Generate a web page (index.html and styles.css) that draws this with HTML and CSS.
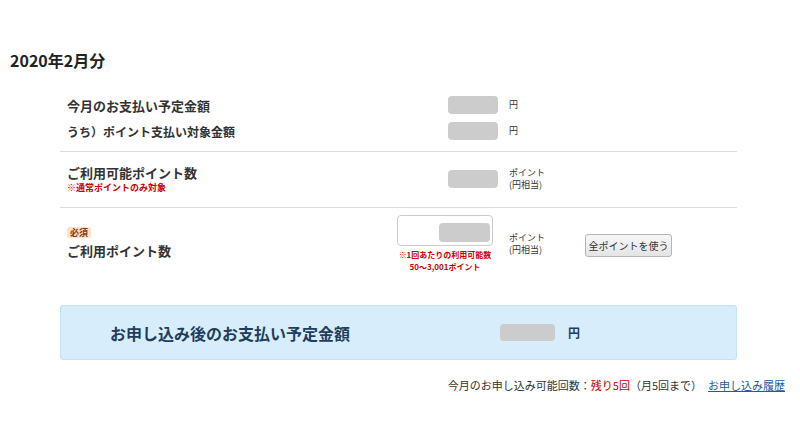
FILE: index.html
```html
<!DOCTYPE html>
<html lang="ja">
<head>
  <meta charset="UTF-8">
  <meta name="viewport" content="width=device-width, initial-scale=1.0">
  <title>ポイント利用</title>
  <link rel="stylesheet" href="styles.css">
</head>
<body>

  <h2 class="month-title">2020年2月分</h2>

  <div class="point-form">
    <!-- Payment amounts -->
    <div class="form-row row-amounts">
      <div class="line">
        <div class="label">今月のお支払い予定金額</div>
        <div class="value"><span class="mask"></span></div>
        <div class="unit">円</div>
      </div>
      <div class="line">
        <div class="label label-sub">うち）ポイント支払い対象金額</div>
        <div class="value"><span class="mask"></span></div>
        <div class="unit">円</div>
      </div>
    </div>

    <!-- Available points -->
    <div class="form-row row-available">
      <div class="line">
        <div class="label">
          <div class="label-text">ご利用可能ポイント数</div>
          <p class="note">※通常ポイントのみ対象</p>
        </div>
        <div class="value"><span class="mask"></span></div>
        <div class="unit">ポイント<br>(円相当)</div>
      </div>
    </div>

    <!-- Points to use -->
    <div class="form-row row-use">
      <div class="line">
        <div class="label label-use">
          <span class="required">必須</span>
          <div class="label-text">ご利用ポイント数</div>
        </div>
        <div class="value value-input">
          <div class="point-input"><span class="mask"></span></div>
          <p class="input-note">※1回あたりの利用可能数<br>50〜3,001ポイント</p>
        </div>
        <div class="unit">ポイント<br>(円相当)</div>
        <div><button class="use-all">全ポイントを使う</button></div>
      </div>
    </div>

    <!-- Total after applying -->
    <div class="total-box">
      <div class="total-label">お申し込み後のお支払い予定金額</div>
      <span class="mask mask-total"></span>
      <span class="total-unit">円</span>
    </div>
  </div>

  <p class="apply-info">
    今月のお申し込み可能回数：<span class="remain">残り5回</span>（月5回まで）<a href="#" class="history-link">お申し込み履歴</a>
  </p>

</body>
</html>
```

FILE: styles.css
```css
body {
  font-family: "Noto Sans CJK JP", "Noto Sans", sans-serif;
  color: #333;
  background-color: #fff;
  margin: 0;
  padding: 50px 15px 0 0;
}

.month-title {
  margin: 0 0 16px 10px;
  font-size: 16px;
  line-height: 20px;
  font-weight: bold;
  color: #222;
}

.point-form {
  margin-left: 60px;
  width: 677px;
}

.form-row {
  border-bottom: 1px solid #ddd;
}

.row-amounts {
  padding: 6px 0 7px;
}

.row-available {
  padding: 12px 0 14px;
}

.row-use {
  padding: 7px 0 0;
  border-bottom: none;
}

.line {
  display: grid;
  grid-template-columns: 330px 101px 87px auto;
  align-items: center;
  padding-left: 7px;
}

.row-amounts .line {
  height: 26px;
}

.label {
  font-size: 13px;
  line-height: 17px;
  font-weight: bold;
}

.label-sub {
  font-size: 12px;
}

.note {
  margin: 1px 0 0;
  font-size: 9px;
  line-height: 11px;
  color: #c00;
}

.value {
  display: flex;
  justify-content: flex-end;
}

.mask {
  display: inline-block;
  width: 50px;
  height: 18px;
  background-color: #ccc;
  border-radius: 4px;
}

.unit {
  padding-left: 11px;
  font-size: 9px;
  line-height: 12px;
}

.label-use {
  align-self: start;
  margin-top: 12px;
}

.required {
  display: block;
  width: max-content;
  padding: 0 3px;
  font-size: 9px;
  line-height: 11px;
  color: #8a3a0e;
  background-color: #fbe3cf;
  border-radius: 2px;
}

.label-use .label-text {
  margin-top: 4px;
}

.value-input {
  flex-direction: column;
  align-items: flex-start;
}

.point-input {
  display: flex;
  justify-content: flex-end;
  box-sizing: border-box;
  width: 96px;
  height: 31px;
  padding: 7px 2px 0;
  border: 1px solid #ccc;
  border-radius: 4px;
}

.point-input .mask {
  width: 51px;
  height: 19px;
}

.input-note {
  width: 96px;
  margin: 3px 0 0;
  font-size: 8px;
  line-height: 12px;
  font-weight: bold;
  color: #c00;
  text-align: center;
  white-space: nowrap;
}

.use-all {
  box-sizing: border-box;
  width: 87px;
  height: 23px;
  padding: 0;
  font-family: inherit;
  font-size: 10px;
  color: #333;
  background: linear-gradient(#f7f7f7, #e4e4e4);
  border: 1px solid #b5b5b5;
  border-radius: 3px;
  cursor: pointer;
}

.total-box {
  display: flex;
  align-items: center;
  box-sizing: border-box;
  height: 55px;
  margin-top: 32px;
  padding-left: 49px;
  background-color: #d7edfc;
  border: 1px solid #c3e2f8;
  border-radius: 3px;
  color: #1f3d5c;
}

.total-label {
  width: 390px;
  font-size: 16px;
  line-height: 20px;
  font-weight: bold;
}

.mask-total {
  width: 55px;
  height: 17px;
}

.total-unit {
  margin-left: 13px;
  font-size: 12px;
  font-weight: bold;
}

.apply-info {
  margin: 17px 0 0;
  font-size: 11px;
  line-height: 16px;
  text-align: right;
}

.remain {
  color: #c00;
}

.history-link {
  margin-left: 6px;
  color: #1d5aa8;
}
```
